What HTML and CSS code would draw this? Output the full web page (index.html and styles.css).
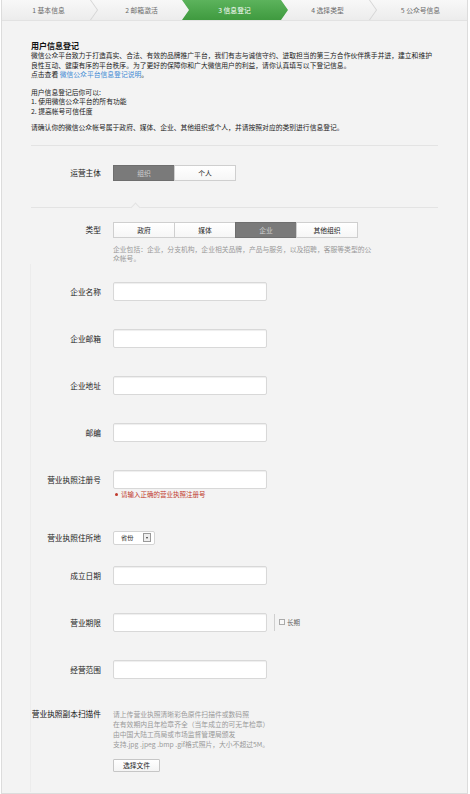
FILE: index.html
```html
<!DOCTYPE html>
<html>
<head>
<meta charset="utf-8" />
<title>用户信息登记</title>
<link rel="stylesheet" href="styles.css">
</head>
<body>
<div class="wrap">
  <ul class="steps">
    <li>1 基本信息</li>
    <li>2 邮箱激活</li>
    <li class="on">3 信息登记</li>
    <li>4 选择类型</li>
    <li class="last">5 公众号信息</li>
  </ul>

  <div class="main">
    <div class="intro">
      <h3>用户信息登记</h3>
      <p>微信公众平台致力于打造真实、合法、有效的品牌推广平台，我们有志与诚信守约、进取担当的第三方合作伙伴携手并进，建立和维护<br>良性互动、健康有序的平台秩序。为了更好的保障你和广大微信用户的利益，请你认真填写以下登记信息。<br>点击查看 <a href="#">微信公众平台信息登记说明</a>。</p>
      <p class="gap">用户信息登记后你可以:<br>1. 使用微信公众平台的所有功能<br>2. 提高帐号可信任度</p>
      <p class="gap2">请确认你的微信公众帐号属于政府、媒体、企业、其他组织或个人，并请按照对应的类别进行信息登记。</p>
    </div>

    <div class="section sec-owner">
      <div class="field seg">
        <label class="label">运营主体</label>
        <div class="body">
          <div class="tabs">
            <span class="tab cur">组织</span><span class="tab">个人</span>
          </div>
        </div>
      </div>
    </div>

    <div class="section sec-type">
      <span class="notch"></span>
      <div class="field seg">
        <label class="label">类型</label>
        <div class="body">
          <div class="tabs">
            <span class="tab">政府</span><span class="tab">媒体</span><span class="tab cur">企业</span><span class="tab">其他组织</span>
          </div>
          <p class="tip">企业包括：企业，分支机构，企业相关品牌，产品与服务，以及招聘，客服等类型的公众帐号。</p>
        </div>
      </div>

      <div class="fields">
        <div class="field first">
          <label class="label">企业名称</label>
          <div class="body"><span class="input"></span></div>
        </div>
        <div class="field">
          <label class="label">企业邮箱</label>
          <div class="body"><span class="input"></span></div>
        </div>
        <div class="field">
          <label class="label">企业地址</label>
          <div class="body"><span class="input"></span></div>
        </div>
        <div class="field">
          <label class="label">邮编</label>
          <div class="body"><span class="input"></span></div>
        </div>
        <div class="field">
          <label class="label">营业执照注册号</label>
          <div class="body">
            <span class="input"></span>
            <p class="error"><i></i>请输入正确的营业执照注册号</p>
          </div>
        </div>
        <div class="field sel-row">
          <label class="label">营业执照住所地</label>
          <div class="body">
            <span class="select">省份<i></i></span>
          </div>
        </div>
        <div class="field after-sel">
          <label class="label">成立日期</label>
          <div class="body"><span class="input"></span></div>
        </div>
        <div class="field">
          <label class="label">营业期限</label>
          <div class="body inline">
            <span class="input"></span>
            <span class="longterm"><i class="check"></i>长期</span>
          </div>
        </div>
        <div class="field">
          <label class="label">经营范围</label>
          <div class="body"><span class="input"></span></div>
        </div>
        <div class="field scan">
          <label class="label dark">营业执照副本扫描件</label>
          <div class="body">
            <p class="tip">请上传营业执照清晰彩色原件扫描件或数码照<br>在有效期内且年检章齐全（当年成立的可无年检章）<br>由中国大陆工商局或市场监督管理局颁发<br>支持.jpg .jpeg .bmp .gif格式照片，大小不超过5M。</p>
            <span class="btn">选择文件</span>
          </div>
        </div>
      </div>
    </div>
  </div>
</div>
</body>
</html>
```

FILE: styles.css
```css
body{
margin:0;
font-family:"Noto Sans CJK SC","Liberation Sans",sans-serif;
font-size:6.8px;
color:#222;
background:#fff;
}
.wrap{
margin:0 2px 0 1px;
border:1px solid #dcdcdc;
border-top:0;
background:#f3f3f3;
min-height:793px;
}

/* steps */
.steps{
display:flex;
margin:0;
padding:0;
list-style:none;
height:20px;
background:linear-gradient(#f8f8f8,#ececec);
border-bottom:1px solid #e2e2e2;
}
.steps li{
position:relative;
flex:1;
text-align:center;
line-height:20px;
color:#6a6a6a;
}
.steps li:before,
.steps li:after{
content:"";
position:absolute;
right:-3px;
height:10px;
width:0;
border-right:1px solid #d4d4d4;
}
.steps li:before{
top:0;
transform:skewX(35deg);
transform-origin:bottom;
}
.steps li:after{
top:10px;
transform:skewX(-35deg);
transform-origin:top;
}
.steps li.last:before,
.steps li.last:after{
display:none;
}
.steps li.on{
color:#fff;
z-index:1;
}
.steps li.on:before{
top:0;
left:-6px;
right:-7px;
width:auto;
height:20px;
border:0;
transform:none;
z-index:-1;
background:linear-gradient(#5cb35c,#3f9a3f);
clip-path:polygon(0 0,calc(100% - 7px) 0,100% 50%,calc(100% - 7px) 100%,0 100%,7px 50%);
}
.steps li.on:after{
display:none;
}

/* main */
.main{
padding:20px 29px 0 29px;
}
.intro h3{
margin:0;
font-size:8px;
line-height:10px;
font-weight:bold;
color:#111;
}
.intro p{
margin:0;
line-height:9.5px;
}
.intro .gap{
margin-top:8px;
}
.intro .gap2{
margin-top:7px;
}
.intro a{
color:#3f8ad4;
text-decoration:none;
}
.intro{
padding-bottom:12px;
}

.section{
position:relative;
border-top:1px solid #e3e3e3;
}
.sec-owner{
padding:19px 0 26px;
}
.sec-type{
padding:14px 0 0;
}
.notch{
position:absolute;
top:-4px;
left:101px;
width:6px;
height:6px;
background:#f3f3f3;
border-top:1px solid #e3e3e3;
border-left:1px solid #e3e3e3;
transform:rotate(45deg);
}

/* fields */
.field{
display:flex;
align-items:flex-start;
margin-top:28px;
}
.field.seg{
margin-top:0;
}
.label{
width:70px;
margin-right:12px;
text-align:right;
line-height:19px;
font-size:7.7px;
color:#222;
white-space:nowrap;
}
.label.dark{
color:#111;
}
.seg .label{
line-height:16px;
}
.fields{
padding-top:18px;
border-left:1px solid #ececec;
margin-left:-1px;
padding-bottom:20px;
}
.fields .field.first{
margin-top:0;
}
.body.inline{
display:flex;
align-items:center;
}

.tabs{
display:flex;
}
.tab{
width:60px;
height:14px;
line-height:14px;
text-align:center;
border:1px solid #cfcfcf;
margin-left:-1px;
background:linear-gradient(#fff,#f6f6f6);
color:#222;
}
.tab:first-child{
margin-left:0;
}
.tab.cur{
background:#7a7a7a;
border-color:#6e6e6e;
color:#cfcfcf;
}
.tip{
margin:7.5px 0 0;
width:262px;
line-height:9.3px;
color:#999;
}

.input{
display:block;
width:152px;
height:17px;
background:#fff;
border:1px solid #d8d8d8;
border-radius:2px;
box-shadow:inset 0 1px 1px #eee;
}
.error{
margin:1px 0 0;
line-height:9px;
font-size:6.5px;
color:#c0392b;
display:flex;
align-items:center;
}
.error i{
width:3px;
height:3px;
border-radius:50%;
background:#c0392b;
margin:0 3px 0 2px;
}

.sel-row{
margin-top:32px;
}
.sel-row .label{
line-height:14px;
}
.select{
display:flex;
align-items:center;
justify-content:space-between;
box-sizing:border-box;
width:42px;
height:14px;
padding:0 3px 0 7px;
background:#fff;
border:1px solid #d4d4d4;
border-radius:2px;
font-size:6.2px;
}
.select i{
position:relative;
width:6px;
height:7px;
border:1px solid #999;
background:#eee;
}
.select i:after{
content:"";
position:absolute;
left:1.5px;
top:3px;
border:1.5px solid transparent;
border-top:2px solid #333;
}
.after-sel{
margin-top:21px;
}

.longterm{
display:flex;
align-items:center;
margin-left:7px;
padding-left:4px;
height:17px;
border-left:1px solid #cfcfcf;
font-size:6.5px;
color:#666;
}
.check{
width:4px;
height:4px;
border:1px solid #aaa;
background:#f7f7f7;
margin-right:2px;
}

.scan{
margin-top:30px;
}
.scan .label{
line-height:10px;
}
.scan .tip{
margin:0;
line-height:10px;
}
.btn{
display:block;
margin-top:10px;
width:45px;
height:11px;
line-height:11px;
text-align:center;
background:linear-gradient(#fff,#f4f4f4);
border:1px solid #c6c6c6;
border-radius:1px;
color:#222;
}
```
